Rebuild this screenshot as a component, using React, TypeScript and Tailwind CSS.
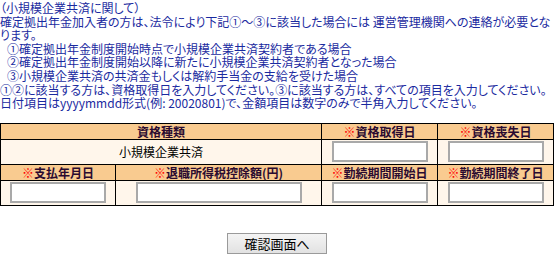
import React from "react";

const font = "font-['MS_PGothic','Noto_Sans_CJK_JP',sans-serif] [font-feature-settings:'palt']";

function Req({ label }: { label: string }) {
  return (
    <>
      <span className="text-[#ff0000] font-normal">※</span>
      {label}
    </>
  );
}

function Field({ wide }: { wide?: boolean }) {
  return (
    <input
      type="text"
      className={`${wide ? "w-[166px]" : "w-[96px]"} h-[21px] bg-white border-2 border-[#a9a9a9] outline-none block mx-auto`}
    />
  );
}

const th = "border border-black bg-[#f9cb90] h-[16px] p-0 text-center font-bold text-[#2a0a30] leading-[15px]";
const td = "border border-black bg-[#fff6eb] h-[25px] p-0 text-center";

export default function App() {
  return (
    <div className={`${font} text-[12px] w-[554px] h-[258px] bg-white overflow-hidden`}>
      <div className="text-[#1a2aa0] leading-[13.6px] whitespace-nowrap pt-[1px]">
        <div>（小規模企業共済に関して）</div>
        <div>確定拠出年金加入者の方は、法令により下記①～③に該当した場合には 運営管理機関への連絡が必要とな</div>
        <div>ります。</div>
        <div className="pl-[7px]">①確定拠出年金制度開始時点で小規模企業共済契約者である場合</div>
        <div className="pl-[7px]">②確定拠出年金制度開始以降に新たに小規模企業共済契約者となった場合</div>
        <div className="pl-[7px]">③小規模企業共済の共済金もしくは解約手当金の支給を受けた場合</div>
        <div>①②に該当する方は、資格取得日を入力してください。③に該当する方は、すべての項目を入力してください。</div>
        <div>日付項目はyyyymmdd形式(例: 20020801)で、金額項目は数字のみで半角入力してください。</div>
      </div>

      <table className="mt-[13px] w-[553px] border-collapse table-fixed">
        <colgroup>
          <col className="w-[115px]" />
          <col className="w-[206px]" />
          <col className="w-[116px]" />
          <col className="w-[116px]" />
        </colgroup>
        <tbody>
          <tr>
            <th colSpan={2} className={th}>資格種類</th>
            <th className={th}><Req label="資格取得日" /></th>
            <th className={th}><Req label="資格喪失日" /></th>
          </tr>
          <tr>
            <td colSpan={2} className={`${td} text-black`}>小規模企業共済</td>
            <td className={td}><Field /></td>
            <td className={td}><Field /></td>
          </tr>
          <tr>
            <th className={th}><Req label="支払年月日" /></th>
            <th className={th}><Req label="退職所得税控除額(円)" /></th>
            <th className={th}><Req label="勤続期間開始日" /></th>
            <th className={th}><Req label="勤続期間終了日" /></th>
          </tr>
          <tr>
            <td className={td}><Field /></td>
            <td className={td}><Field wide /></td>
            <td className={td}><Field /></td>
            <td className={td}><Field /></td>
          </tr>
        </tbody>
      </table>

      <div className="flex justify-center mt-[27px]">
        <button
          type="button"
          className="w-[100px] h-[21px] border border-[#9a9a9a] bg-gradient-to-b from-[#f4f4f4] to-[#e2e2e2] text-black text-[13px] leading-[19px] p-0"
        >
          確認画面へ
        </button>
      </div>
    </div>
  );
}
